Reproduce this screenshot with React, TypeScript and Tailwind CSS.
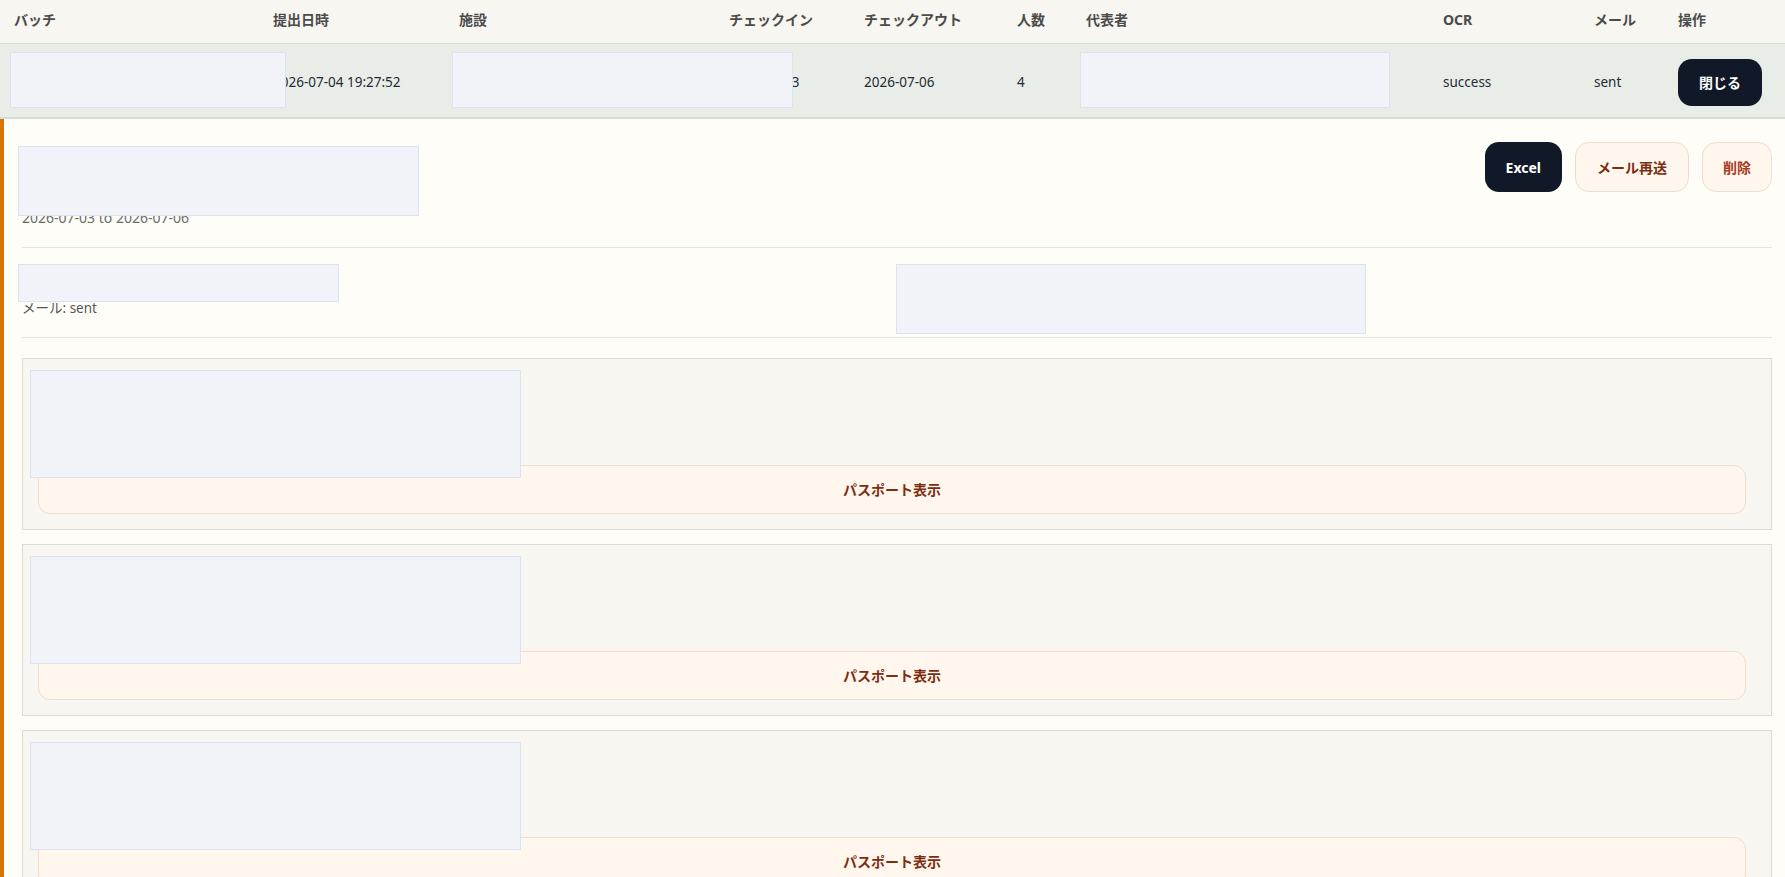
import type { ReactNode } from "react";

const COLS =
  "grid grid-cols-[259px_186px_270px_135px_153px_69px_357px_151px_84px_1fr]";

const HEAD = ["バッチ", "提出日時", "施設", "チェックイン", "チェックアウト", "人数", "代表者", "OCR", "メール", "操作"];

const GUESTS = [
  { name: "GUEST 1", nat: "国籍: JPN", no: "旅券番号: TK0000001", dob: "生年月日: 1990-01-01" },
  { name: "GUEST 2", nat: "国籍: JPN", no: "旅券番号: TK0000002", dob: "生年月日: 1991-02-02" },
  { name: "GUEST 3", nat: "国籍: JPN", no: "旅券番号: TK0000003", dob: "生年月日: 1992-03-03" },
];

// privacy mask laid over redacted content
function Mask({ className }: { className: string }) {
  return <div className={"absolute z-10 border border-[#dbe3ee] bg-[#f0f4f9] " + className} />;
}

function Cell({ children }: { children?: ReactNode }) {
  return <div className="truncate px-[14px]">{children}</div>;
}

function GuestCard({ g }: { g: (typeof GUESTS)[number] }) {
  return (
    <div className="relative border border-[#dcdad4] bg-[#f7f6f1] pt-[15px] pr-[25px] pb-[15px] pl-[15px]">
      <div className="mb-[11px] text-[13px] leading-5 text-[#374151]">
        <div className="font-bold">{g.name}</div>
        <div>{g.nat}</div>
        <div>{g.no}</div>
        <div>{g.dob}</div>
      </div>
      <button
        type="button"
        className="h-[49px] w-full rounded-xl border border-[#efddce] bg-[#fff6ed] text-[14px] font-bold text-[#7c2d12]"
      >
        パスポート表示
      </button>
      <Mask className="top-[11px] left-[7px] h-[108px] w-[491px]" />
    </div>
  );
}

export default function App() {
  return (
    <div className="min-h-screen bg-[#fffdf8] font-['Noto_Sans','Noto_Sans_CJK_JP',sans-serif] text-[13.5px]">
      <div className={COLS + " h-[44px] border-b border-[#d9ded7] bg-[#f7f6f1] pt-[10px] text-[14px] leading-5 font-bold text-[#4b4b4b]"}>
        {HEAD.map((h) => (
          <Cell key={h}>{h}</Cell>
        ))}
      </div>

      <div className={COLS + " relative h-[75px] items-center border-b-2 border-[#d6dcd5] bg-[#e8eee7] pt-[3px] text-[#1f2937]"}>
        <Cell>B-20260704-0012</Cell>
        <Cell>2026-07-04 19:27:52</Cell>
        <Cell>施設名</Cell>
        <Cell>2026-07-03</Cell>
        <Cell>2026-07-06</Cell>
        <Cell>4</Cell>
        <Cell>代表者名</Cell>
        <Cell>success</Cell>
        <Cell>sent</Cell>
        <div className="px-[14px]">
          <button type="button" className="h-[47px] rounded-[14px] bg-[#111827] px-[21px] text-[14px] font-bold text-white">
            閉じる
          </button>
        </div>
        <Mask className="top-[8px] left-[10px] h-[56px] w-[276px]" />
        <Mask className="top-[8px] left-[452px] h-[56px] w-[341px]" />
        <Mask className="top-[8px] left-[1080px] h-[56px] w-[310px]" />
      </div>

      <div className="border-l-4 border-[#d97706] bg-[#fffdf8] pt-[23px] pr-[13px] pl-[18px]">
        <div className="flex items-start justify-between pb-[19px]">
          <div className="relative">
            <div className="mt-[4px] text-xl leading-7 font-bold text-[#1f2937]">施設名</div>
            <div className="mt-1 text-[13px] leading-5 text-[#4b5563]">代表者名 / 4名</div>
            <div className="mt-[10px] text-[14px] leading-5 text-[#6b6b6b]">2026-07-03 to 2026-07-06</div>
            <Mask className="top-[4px] left-[-4px] h-[70px] w-[401px]" />
          </div>
          <div className="flex gap-[13px]">
            <button type="button" className="h-[50px] rounded-[14px] bg-[#111827] px-[21px] text-[14px] font-bold text-white">
              Excel
            </button>
            <button
              type="button"
              className="h-[50px] rounded-[14px] border border-[#f0dccc] bg-[#fff6ee] px-[21px] text-[14px] font-bold text-[#7c2d12]"
            >
              メール再送
            </button>
            <button
              type="button"
              className="h-[50px] rounded-[14px] border border-[#f0dccc] bg-[#fff6ee] px-[20px] text-[14px] font-bold text-[#a83a22]"
            >
              削除
            </button>
          </div>
        </div>

        <div className="h-px bg-[#e7e4de]" />

        <div className="grid h-[89px] grid-cols-2 leading-5 text-[#555555]">
          <div className="relative pt-[30px]">
            <div>OCR: success</div>
            <div>メール: sent</div>
            <Mask className="top-[16px] left-[-4px] h-[38px] w-[321px]" />
          </div>
          <div className="relative pt-[20px]">
            <div>連絡先</div>
            <div>電話番号</div>
            <div>メールアドレス</div>
            <Mask className="top-[16px] left-[-1px] h-[70px] w-[470px]" />
          </div>
        </div>

        <div className="h-px bg-[#e7e4de]" />

        <div className="flex flex-col gap-[14px] pt-[20px] pb-[20px]">
          {GUESTS.map((g) => (
            <GuestCard key={g.name} g={g} />
          ))}
        </div>
      </div>
    </div>
  );
}
